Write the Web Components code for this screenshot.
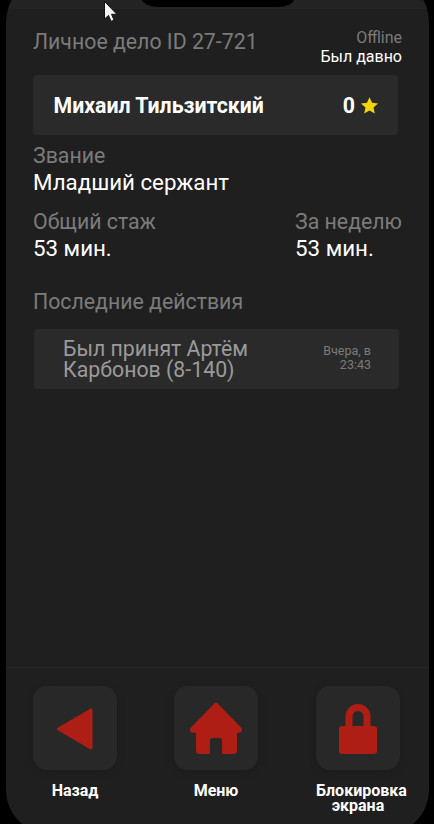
<!DOCTYPE html>
<html lang="ru"><head><meta charset="utf-8">
<style>
html,body{margin:0;padding:0;background:#000;width:434px;height:824px;overflow:hidden;font-family:Roboto,"Noto Sans",sans-serif}
</style></head><body>
<template id="t-phone"><style>
:host{display:flex;flex-direction:column;position:relative;box-sizing:border-box;width:423px;height:856px;margin:-22px 0 0 6px;padding-bottom:10px;background:#1f1f1f;border-radius:44px;overflow:hidden;color:#fff}
.status{height:31px;flex:none;background:#232323}
.notch{position:absolute;left:136px;top:0;width:152px;height:29px;background:#000;border-radius:0 0 17px 17px / 0 0 8px 8px}
.cursor{position:absolute;left:97px;top:22px;width:16px;height:24px}
.main{flex:1;min-height:0;display:flex;flex-direction:column}
</style><div class="status"></div><div class="main"><slot></slot></div><div class="notch"></div>
<svg class="cursor" viewBox="0 0 16 24"><path d="M1.500 1.500V19l4-3.600 2.600 6 3-1.300-2.600-5.800h5.400z" fill="#f4f4f4" stroke="#111" stroke-width="1"/></svg></template>

<template id="t-head"><style>
:host{display:flex;justify-content:space-between;align-items:flex-start;padding:20px 27px 0 27px;height:46px;box-sizing:content-box}
.t{font-size:21.300px;line-height:24px;color:#7b7b7b;margin-top:1px}
.r{text-align:right;font-size:16px;line-height:19px}
.o{color:#7b7b7b;line-height:18px}.b{color:#fff}
</style><div class="t"><slot name="title"></slot></div><div class="r"><div class="o"><slot name="state"></slot></div><div class="b"><slot name="seen"></slot></div></div></template>

<template id="t-user"><style>
:host{display:flex;align-items:center;justify-content:space-between;box-sizing:border-box;margin:0 31px 0 27px;height:60px;padding:0 19px 0 20.500px;background:#2a2a2a;border-radius:4px;font-weight:700;font-size:21.300px;color:#fff}
.s{display:flex;align-items:center;gap:5px}
svg{width:19px;height:19px;display:block}
</style><span><slot></slot></span><span class="s"><slot name="score"></slot><svg viewBox="0 0 24 24"><path d="M12 1.600l3.200 7 7.600.8-5.700 5.100 1.600 7.500L12 18.200 5.300 22l1.600-7.500L1.200 9.400l7.600-.8z" fill="#f2d60d"/></svg></span></template>

<template id="t-field"><style>
:host{display:block}
.l{font-size:21.300px;line-height:24px;color:#7b7b7b}
.v{font-size:22.300px;line-height:28px;color:#fff}
</style><div class="l"><slot name="label"></slot></div><div class="v"><slot></slot></div></template>

<template id="t-action"><style>
:host{display:flex;align-items:flex-start;justify-content:space-between;box-sizing:border-box;margin:0 30px 0 28px;height:60px;padding:9px 28px 0 29px;background:#2a2a2a;border-radius:4px}
.m{font-size:21.300px;line-height:21.300px;color:#9a9a9a;width:215px}
.d{font-size:12.500px;line-height:14px;color:#7b7b7b;text-align:right;width:60px;margin-top:6px}
</style><div class="m"><slot></slot></div><div class="d"><slot name="time"></slot></div></template>

<template id="t-dock"><style>
:host{display:flex;justify-content:space-between;box-sizing:border-box;height:157px;padding:18px 29px 0 27px;border-top:1px solid #272727}
</style><slot></slot></template>

<template id="t-btn"><style>
:host{display:flex;flex-direction:column;align-items:center;width:84px;font-weight:700;font-size:16px;line-height:15px;color:#fff;text-align:center}
.b{width:84px;height:84px;border-radius:14px;background:#282828;box-shadow:0 2px 10px rgba(0,0,0,.12);display:flex;align-items:center;justify-content:center;margin-bottom:13px}
.t{width:84px}
::slotted(svg){display:block}
</style><div class="b"><slot name="icon"></slot></div><div class="t"><slot></slot></div></template>

<script>
for (const [n,id] of [['x-phone','t-phone'],['x-head','t-head'],['x-user','t-user'],['x-field','t-field'],['x-action','t-action'],['x-dock','t-dock'],['x-btn','t-btn']]) {
  customElements.define(n, class extends HTMLElement {
    constructor(){super();this.attachShadow({mode:'open'}).appendChild(document.getElementById(id).content.cloneNode(true));}
  });
}
</script>
<x-phone>
  <x-head><span slot="title">Личное дело ID 27-721</span><span slot="state">Offline</span><span slot="seen">Был давно</span></x-head>
  <x-user>Михаил Тильзитский<span slot="score">0</span></x-user>
  <x-field style="margin:9px 0 0 27px"><span slot="label">Звание</span>Младший сержант</x-field>
  <div style="display:flex;justify-content:space-between;margin:14px 27px 0 27px">
    <x-field><span slot="label">Общий стаж</span>53 мин.</x-field>
    <x-field><span slot="label">За неделю</span>53 мин.</x-field>
  </div>
  <div style="margin:28px 0 0 27px;font-size:21.300px;line-height:24px;color:#7b7b7b">Последние действия</div>
  <div style="height:15px"></div>
  <x-action>Был принят Артём Карбонов (8-140)<span slot="time">Вчера, в 23:43</span></x-action>
  <div style="flex:1"></div>
  <x-dock>
    <x-btn><svg slot="icon" style="margin-top:1px" width="40" height="44" viewBox="0 0 40 44"><path d="M36 3L3.500 22 36 41z" fill="#ae1e14" stroke="#ae1e14" stroke-width="3" stroke-linejoin="round"/></svg>Назад</x-btn>
    <x-btn style="margin-left:-1px"><svg slot="icon" style="margin-top:1px" width="52" height="51" viewBox="0 0 52 51"><path d="M23.800.9a3 3 0 0 1 4.400 0L51 24.600a3 3 0 0 1-2.200 5.200H47V47.500a3.500 3.500 0 0 1-3.500 3.500H32V37.500a2.500 2.500 0 0 0-2.500-2.500h-7a2.500 2.500 0 0 0-2.500 2.500V51H9.500A3.500 3.500 0 0 1 6 47.500V29.800H3.200A3 3 0 0 1 1 24.600z" fill="#ae1e14"/></svg>Меню</x-btn>
    <x-btn><svg slot="icon" style="margin-top:2px" width="38" height="50" viewBox="0 0 38 50"><path d="M10 22V12.500a9 9 0 0 1 18 0V22" fill="none" stroke="#ae1e14" stroke-width="7"/><rect y="22" width="38" height="28" rx="3" fill="#ae1e14"/></svg>Блокировка экрана</x-btn>
  </x-dock>
</x-phone>
</body></html>
